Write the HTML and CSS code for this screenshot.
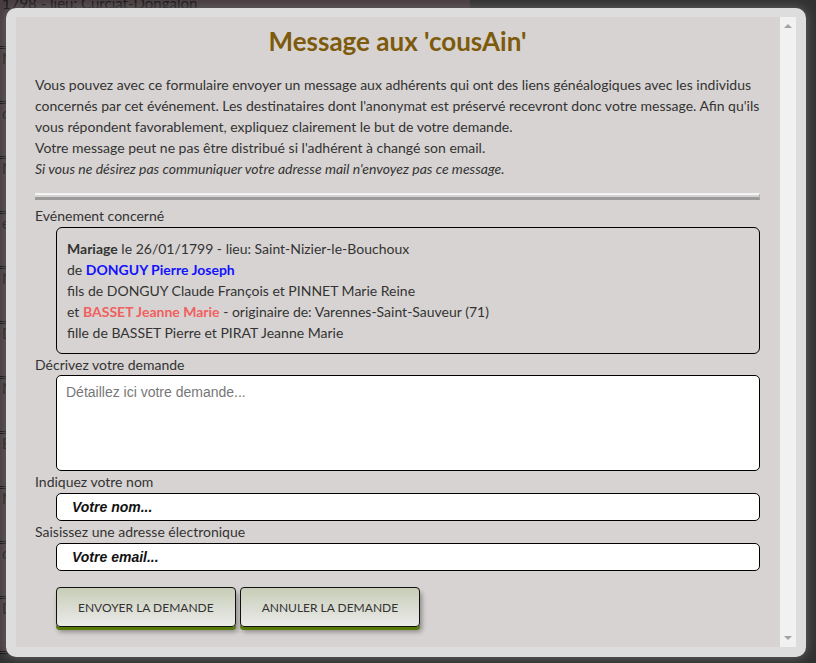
FILE: index.html
```html
<!DOCTYPE html>
<html lang="fr">
<head>
    <meta charset="UTF-8">
    <meta name="viewport" content="width=device-width, initial-scale=1.0">
    <title>Message aux cousAins</title>
    <link rel="stylesheet" href="styles.css">
</head>
<body>
    <!-- page behind the dialog -->
    <div class="page">
        <div class="page-row">1798 - lieu: Curciat-Dongalon</div>
        <div class="page-row">Mariage le 12/02/1799 - lieu: Bâgé</div>
        <div class="page-row">de BERNARD Jean Claude</div>
        <div class="page-row">Mariage le 26/01/1799</div>
        <div class="page-row">et PERRET Marie</div>
        <div class="page-row">Naissance le 04/1799</div>
        <div class="page-row">Décès le 17/03/1799</div>
        <div class="page-row">Mariage le 21/05/1799</div>
        <div class="page-row">Baptême le 02/06/1799</div>
        <div class="page-row">Mariage le 30/06/1799</div>
        <div class="page-row">de DUPONT Pierre</div>
        <div class="page-row">Décès le 11/07/1799</div>
    </div>
    <div class="overlay"></div>

    <div class="modal">
        <div class="modal-inner">
            <div class="modal-content">
                <h2 class="modal-title">Message aux 'cousAin'</h2>
                <p class="intro">
                    Vous pouvez avec ce formulaire envoyer un message aux adhérents qui ont des liens généalogiques avec les individus concernés par cet événement. Les destinataires dont l'anonymat est préservé recevront donc votre message. Afin qu'ils vous répondent favorablement, expliquez clairement le but de votre demande.<br>
                    Votre message peut ne pas être distribué si l'adhérent à changé son email.<br>
                    <em>Si vous ne désirez pas communiquer votre adresse mail n'envoyez pas ce message.</em>
                </p>
                <hr class="sep">

                <form class="msg-form">
                    <label class="field-label">Evénement concerné</label>
                    <div class="event-box">
                        <b>Mariage</b> le 26/01/1799 - lieu: Saint-Nizier-le-Bouchoux<br>
                        de <b class="man">DONGUY Pierre Joseph</b><br>
                        fils de DONGUY Claude François et PINNET Marie Reine<br>
                        et <b class="woman">BASSET Jeanne Marie</b> - originaire de: Varennes-Saint-Sauveur (71)<br>
                        fille de BASSET Pierre et PIRAT Jeanne Marie
                    </div>

                    <label class="field-label" for="demande">Décrivez votre demande</label>
                    <textarea id="demande" class="field-area" placeholder="Détaillez ici votre demande..."></textarea>

                    <label class="field-label" for="nom">Indiquez votre nom</label>
                    <input id="nom" class="field-input" type="text" placeholder="Votre nom...">

                    <label class="field-label" for="email">Saisissez une adresse électronique</label>
                    <input id="email" class="field-input" type="email" placeholder="Votre email...">

                    <div class="buttons">
                        <button type="button" class="btn">Envoyer la demande</button>
                        <button type="button" class="btn">Annuler la demande</button>
                    </div>
                </form>
            </div>
            <div class="scrollbar">
                <span class="arrow arrow-up"></span>
                <span class="arrow arrow-down"></span>
            </div>
        </div>
    </div>
</body>
</html>
```

FILE: styles.css
```css
body {
    margin: 0;
    background: #3a3a3a;
    font-family: Lato, "Liberation Sans", sans-serif;
    overflow: hidden;
}

.page {
    width: 470px;
    margin-top: -6px;
    background: #54464a;
}

.page-row {
    height: 52px;
    padding: 0 2px;
    font-size: 15px;
    color: #161616;
    border-bottom: 3px double #111;
}

.overlay {
    position: fixed;
    inset: 0;
    background: rgba(0, 0, 0, 0.15);
}

.modal {
    position: fixed;
    left: 6px;
    top: 8px;
    width: 800px;
    height: 649px;
    box-sizing: border-box;
    padding: 9px 10px 10px 10px;
    background: #dedddd;
    border-radius: 10px;
    box-shadow: 0 0 12px rgba(110, 110, 110, 0.9);
}

.modal-inner {
    display: flex;
    height: 100%;
    background: #d7d3d2;
}

.modal-content {
    flex: 1;
    padding: 9px 20px 0 19px;
    color: #333;
    font-size: 14px;
}

.modal-title {
    margin: 0;
    text-align: center;
    font-size: 26px;
    line-height: 30px;
    font-weight: bold;
    color: #7d5a0c;
}

.intro {
    margin: 18px 0 0 0;
    line-height: 21px;
}

.sep {
    margin: 14px 0 5px 0;
    height: 2px;
    border: none;
    border-top: 2px solid #f4f4f4;
    border-bottom: 3px solid #9a9a9a;
    border-right: 1px solid #b0b0b0;
}

.msg-form {
    display: flex;
    flex-direction: column;
}

.field-label {
    display: block;
    line-height: 21px;
}

.event-box {
    margin: 1px 0 0 21px;
    padding: 10px 10px;
    border: 1px solid #000;
    border-radius: 6px;
    line-height: 21px;
}

.man {
    color: #1212ff;
}

.woman {
    color: #f0605e;
}

.field-area,
.field-input {
    margin-left: 21px;
    width: 704px;
    box-sizing: border-box;
    border: 1px solid #000;
    border-radius: 5px;
    background: #fff;
    font-family: "Liberation Sans", Arial, sans-serif;
    font-size: 14px;
}

.field-area {
    height: 96px;
    padding: 8px 9px;
    resize: none;
}

.field-area::placeholder {
    color: #777;
}

.field-input {
    height: 28px;
    margin-top: 1px;
    padding: 0 15px;
}

.field-input::placeholder {
    color: #111;
    font-weight: bold;
    font-style: italic;
}

.buttons {
    display: flex;
    gap: 4px;
    margin: 16px 0 0 21px;
}

.btn {
    height: 40px;
    padding: 0 21px;
    font-family: Lato, sans-serif;
    font-size: 12px;
    text-transform: uppercase;
    color: #333;
    background: linear-gradient(#c7cdb7, #ebebea);
    border: 1px solid #111;
    border-radius: 4px;
    box-shadow: 0 3px 0 #557a05, 2px 5px 5px rgba(0, 0, 0, 0.35);
    cursor: pointer;
}

.scrollbar {
    width: 17px;
    background: #f1f1f1;
    display: flex;
    flex-direction: column;
    justify-content: space-between;
    align-items: center;
    padding: 7px 0;
}

.arrow {
    width: 0;
    height: 0;
    border-left: 4px solid transparent;
    border-right: 4px solid transparent;
}

.arrow-up {
    border-bottom: 4px solid #a3a3a3;
}

.arrow-down {
    border-top: 4px solid #a3a3a3;
}
```
